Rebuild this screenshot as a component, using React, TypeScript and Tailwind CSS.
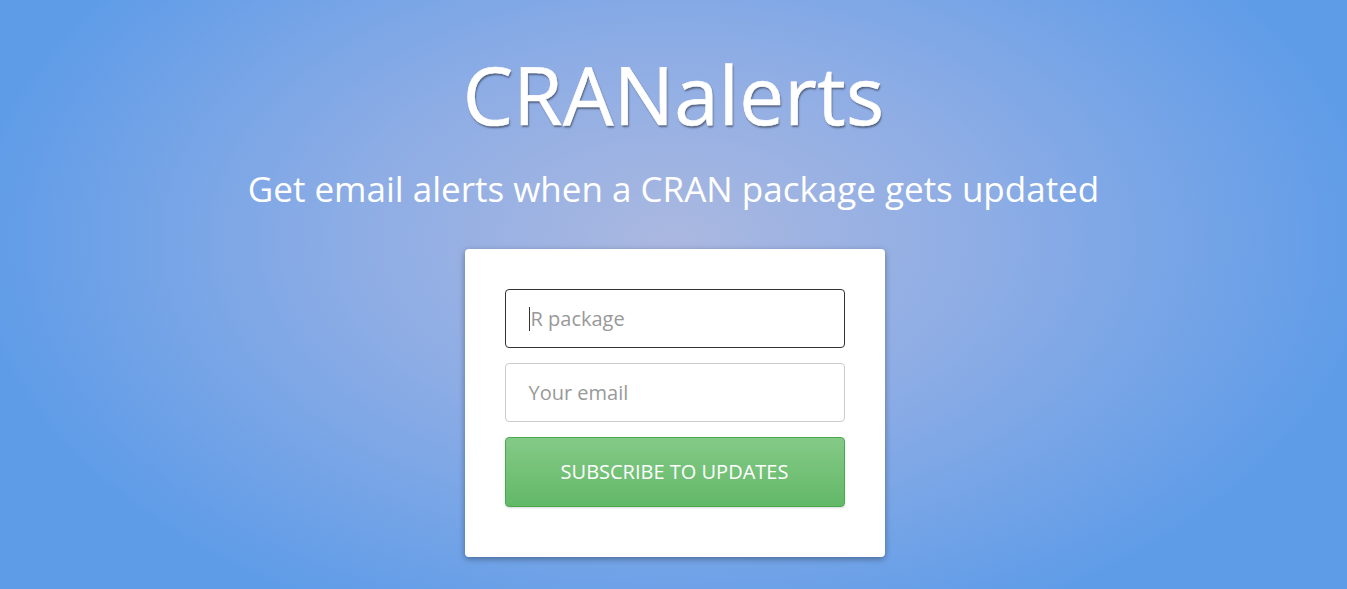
import React from "react";

export default function App() {
  return (
    <div
      className="w-full h-[589px] overflow-hidden flex flex-col items-center bg-[radial-gradient(ellipse_700px_420px_at_50%_240px,#aab8e0_0%,#8eade5_45%,#5f9ce8_100%)]"
      style={{ fontFamily: '"Open Sans", sans-serif' }}
    >
      <h1 className="mt-[54px] text-[80px] leading-[80px] text-white font-normal tracking-[0.2px] [-webkit-text-stroke:0.6px_white] [text-shadow:1px_2px_2px_rgba(0,0,0,0.45)]">
        CRANalerts
      </h1>
      <p className="mt-[37px] text-[35px] leading-[35px] text-white font-normal">
        Get email alerts when a CRAN package gets updated
      </p>
      <div className="mt-[43px] ml-[2px] w-[420px] bg-white rounded-[4px] shadow-[0_2px_6px_rgba(0,0,0,0.35)] px-[40px] pt-[40px] pb-[50px] flex flex-col gap-[15px]">
        <div className="h-[59px] border border-[#333] rounded-[4px] flex items-center pl-[23px] text-[20px] text-[#999]">
          <span className="w-px h-[24px] bg-[#333] mr-px" />
          R package
        </div>
        <div className="h-[59px] border border-[#ccc] rounded-[4px] flex items-center pl-[23px] text-[20px] text-[#999]">
          Your email
        </div>
        <button className="h-[70px] rounded-[4px] border border-[#4aa84f] bg-gradient-to-b from-[#84ca87] to-[#63b868] text-white text-[20px] uppercase shadow-[0_1px_2px_rgba(0,0,0,0.15)]">
          Subscribe to updates
        </button>
      </div>
    </div>
  );
}
